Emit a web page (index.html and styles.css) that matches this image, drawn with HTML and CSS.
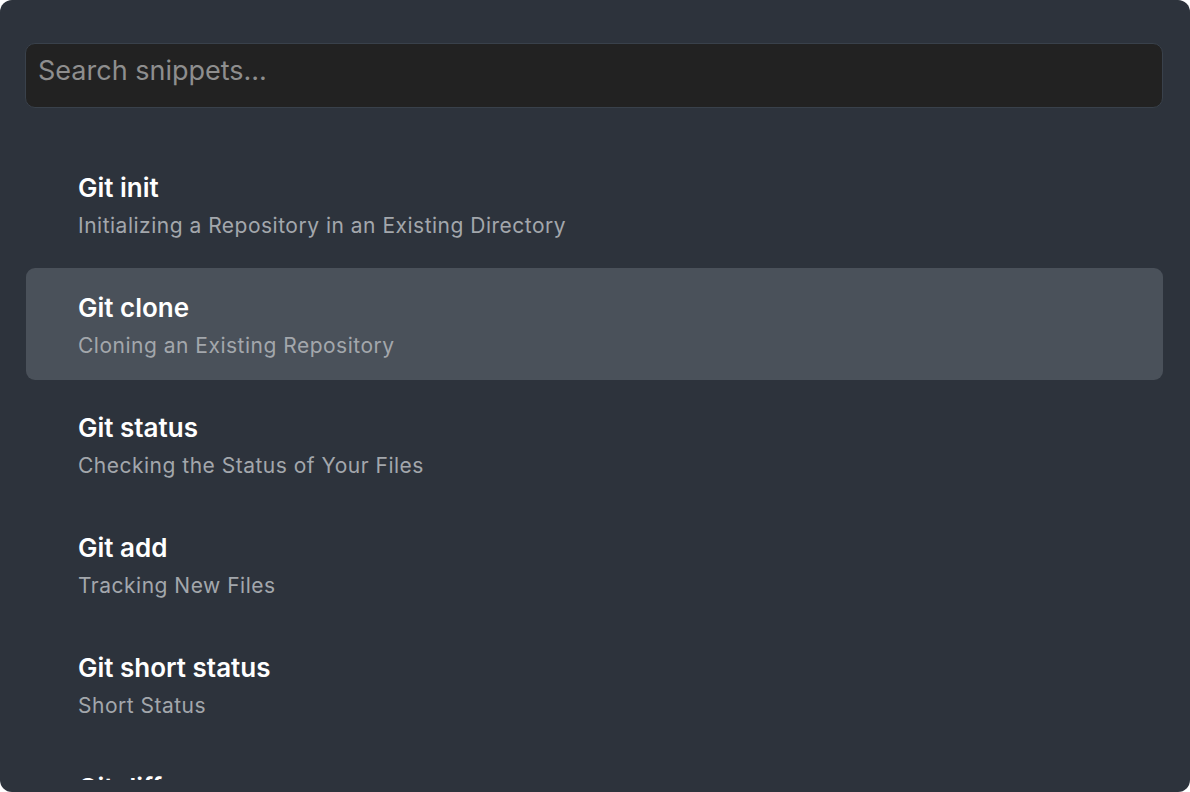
FILE: index.html
```html
<!DOCTYPE html>
<html lang="en">
  <head>
    <meta charset="UTF-8" />
    <meta name="viewport" content="width=device-width, initial-scale=1.0" />
    <title>Snippets</title>
    <link rel="stylesheet" href="styles.css">
  </head>
  <body>
    <div class="window">
      <div class="search">
        <input type="text" class="search-input" placeholder="Search snippets..." />
      </div>

      <ul class="snippet-list">
        <li class="snippet">
          <div class="snippet-title">Git init</div>
          <div class="snippet-desc">Initializing a Repository in an Existing Directory</div>
        </li>
        <li class="snippet selected">
          <div class="snippet-title">Git clone</div>
          <div class="snippet-desc">Cloning an Existing Repository</div>
        </li>
        <li class="snippet">
          <div class="snippet-title">Git status</div>
          <div class="snippet-desc">Checking the Status of Your Files</div>
        </li>
        <li class="snippet">
          <div class="snippet-title">Git add</div>
          <div class="snippet-desc">Tracking New Files</div>
        </li>
        <li class="snippet">
          <div class="snippet-title">Git short status</div>
          <div class="snippet-desc">Short Status</div>
        </li>
        <li class="snippet">
          <div class="snippet-title">Git diff</div>
          <div class="snippet-desc">Viewing Your Staged and Unstaged Changes</div>
        </li>
      </ul>
    </div>
  </body>
</html>
```

FILE: styles.css
```css
body {
  margin: 0;
  background-color: #ffffff;
  font-family: Inter, "Noto Sans", sans-serif;
}

/* App window with rounded corners */
.window {
  height: 792px;
  display: flex;
  flex-direction: column;
  background-color: #2d333c;
  border-radius: 12px;
  overflow: hidden;
  padding: 43px 27px 12px 25px;
  box-sizing: border-box;
}

.search-input {
  display: block;
  width: 100%;
  height: 65px;
  box-sizing: border-box;
  padding: 0 12px 10px;
  background-color: #222222;
  border: 1px solid #39414b;
  border-radius: 10px;
  color: #e6e6e6;
  font-family: inherit;
  font-size: 27px;
  outline: none;
}

.search-input::placeholder {
  color: #8e8e8e;
}

.snippet-list {
  flex: 1;
  min-height: 0;
  overflow: hidden;
  list-style: none;
  margin: 40px 0 0 1px;
  padding: 0;
  display: flex;
  flex-direction: column;
  gap: 8px;
}

.snippet {
  flex-shrink: 0;
  height: 112px;
  box-sizing: border-box;
  padding: 24px 52px 0;
  border-radius: 9px;
}

.snippet.selected {
  background-color: #4a515a;
}

.snippet-title {
  color: #ffffff;
  font-size: 26px;
  font-weight: 600;
  line-height: 32px;
}

.snippet-desc {
  margin-top: 9px;
  color: #a3a7ac;
  font-size: 21px;
  letter-spacing: 0.5px;
  line-height: 26px;
}
```
